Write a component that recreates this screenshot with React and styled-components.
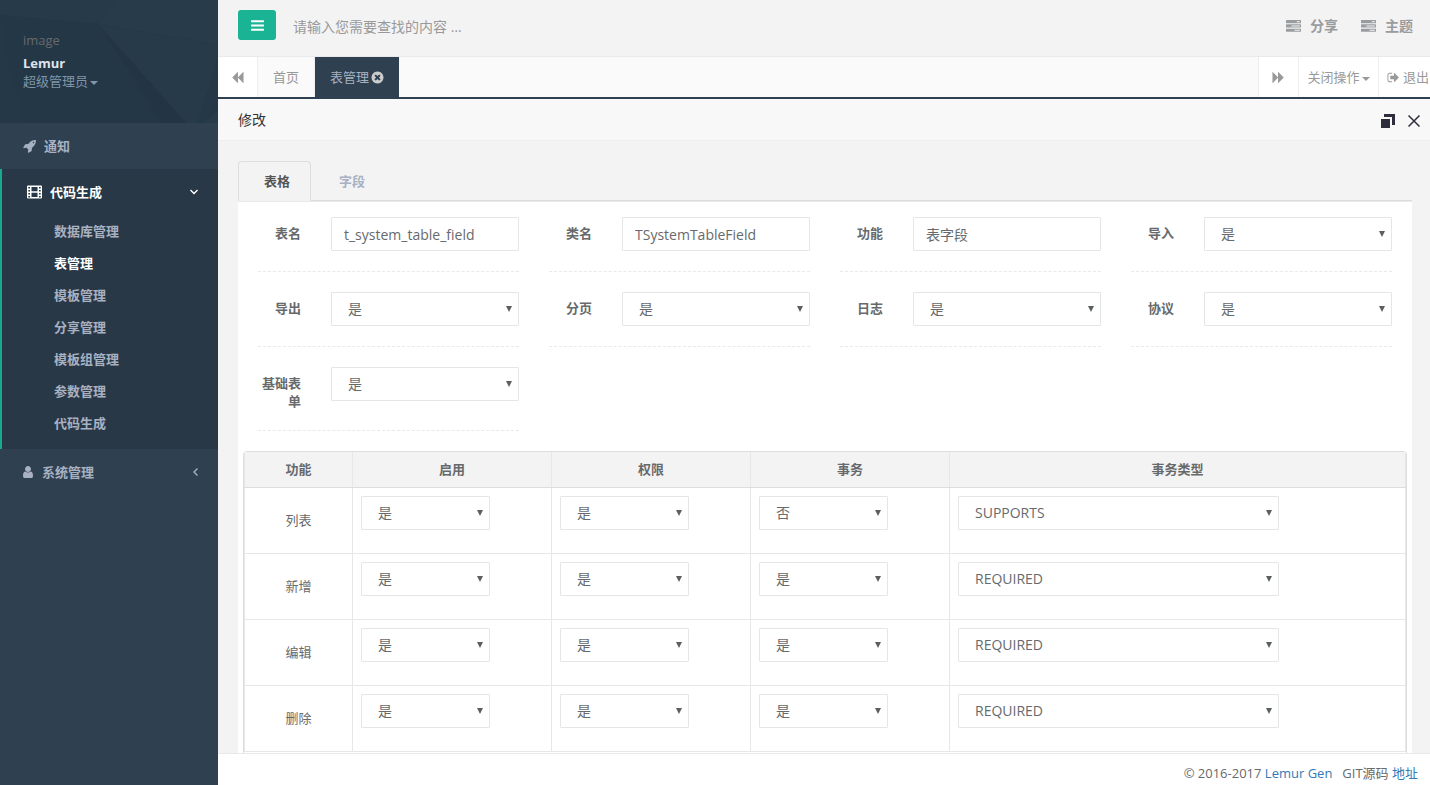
import React from "react";
import styled, { createGlobalStyle, css } from "styled-components";

const Global = createGlobalStyle`
  *, *::before, *::after { box-sizing: border-box; }
  body {
    margin: 0;
    font-family: "Open Sans", "Noto Sans CJK SC", sans-serif;
    font-size: 13px;
    line-height: 18px;
    color: #676a6c;
    background: #2f4050;
  }
  button, input, select { font: inherit; color: inherit; }
  a { text-decoration: none; color: inherit; }
  ul { list-style: none; margin: 0; padding: 0; }
`;

const Shell = styled.div`
  display: grid;
  grid-template-columns: 218px minmax(0, 1fr);
  height: 100vh;
`;

/* Icons */
const PATHS = {
  rocket:
    "M1440 448q0-40-28-68t-68-28-68 28-28 68 28 68 68 28 68-28 28-68zm224-288q0 249-75.5 430.5t-253.5 360.5q-81 80-195 176l-20 379q-2 16-16 26l-384 224q-7 4-16 4-12 0-23-9l-64-64q-13-14-8-32l85-276-281-281-276 85q-3 1-9 1-14 0-23-9l-64-64q-17-19-5-39l224-384q10-14 26-16l379-20q96-114 176-195 188-187 358-258t431-71q14 0 24 9.5t10 22.5z",
  user:
    "M1536 1399q0 109-62.5 187t-150.5 78h-854q-88 0-150.5-78t-62.5-187q0-85 8.5-160.5t31.5-152 58.5-131 94-89 134.5-34.5q131 128 313 128t313-128q76 0 134.5 34.5t94 89 58.5 131 31.5 152 8.5 160.5zm-256-887q0 159-112.5 271.5t-271.5 112.5-271.5-112.5-112.5-271.5 112.5-271.5 271.5-112.5 271.5 112.5 112.5 271.5z",
  tasks:
    "M1024 1408h640v-128h-640v128zm-384-512h1024v-128h-1024v128zm640-512h384v-128h-384v128zm512 832v256q0 26-19 45t-45 19h-1664q-26 0-45-19t-19-45v-256q0-26 19-45t45-19h1664q26 0 45 19t19 45zm0-512v256q0 26-19 45t-45 19h-1664q-26 0-45-19t-19-45v-256q0-26 19-45t45-19h1664q26 0 45 19t19 45zm0-512v256q0 26-19 45t-45 19h-1664q-26 0-45-19t-19-45v-256q0-26 19-45t45-19h1664q26 0 45 19t19 45z",
  bars:
    "M1664 1344v128q0 26-19 45t-45 19h-1408q-26 0-45-19t-19-45v-128q0-26 19-45t45-19h1408q26 0 45 19t19 45zm0-512v128q0 26-19 45t-45 19h-1408q-26 0-45-19t-19-45v-128q0-26 19-45t45-19h1408q26 0 45 19t19 45zm0-512v128q0 26-19 45t-45 19h-1408q-26 0-45-19t-19-45v-128q0-26 19-45t45-19h1408q26 0 45 19t19 45z",
  close:
    "M1277 1122q0-26-19-45l-181-181 181-181q19-19 19-45 0-27-19-46l-90-90q-19-19-46-19-26 0-45 19l-181 181-181-181q-19-19-45-19-27 0-46 19l-90 90q-19 19-19 46 0 26 19 45l181 181-181 181q-19 19-19 45 0 27 19 46l90 90q19 19 46 19 26 0 45-19l181-181 181 181q19 19 45 19 27 0 46-19l90-90q19-19 19-46zm387-226q0 209-103 385.5t-279.5 279.5-385.5 103-385.5-103-279.5-279.5-103-385.5 103-385.5 279.5-279.5 385.5-103 385.5 103 279.5 279.5 103 385.5z",
  signOut:
    "M704 1440q0 4 1 20t.5 26.5-3 23.5-10 19.5-20.5 6.5h-320q-119 0-203.5-84.5t-84.5-203.5v-704q0-119 84.5-203.5t203.5-84.5h320q13 0 22.5 9.5t9.5 22.5q0 4 1 20t.5 26.5-3 23.5-10 19.5-20.5 6.5h-320q-66 0-113 47t-47 113v704q0 66 47 113t113 47h312l11.5 1 11.5 3 8 5.5 7 9 2 13.5zm928-544q0 26-19 45l-544 544q-19 19-45 19t-45-19-19-45v-288h-448q-26 0-45-19t-19-45v-384q0-26 19-45t45-19h448v-288q0-26 19-45t45-19 45 19l544 544q19 19 19 45z",
  backward:
    "M1683 141q19-19 32-13t13 32v1472q0 26-13 32t-32-13l-710-710q-9-9-13-19v710q0 26-13 32t-32-13l-710-710q-19-19-19-45t19-45l710-710q19-19 32-13t13 32v710q4-10 13-19z",
  forward:
    "M109 1651q-19 19-32 13t-13-32v-1472q0-26 13-32t32 13l710 710q9 9 13 19v-710q0-26 13-32t32 13l710 710q19 19 19 45t-19 45l-710 710q-19 19-32 13t-13-32v-710q-4 10-13 19z",
};

const Svg = styled.svg`
  flex: none;
  display: block;
`;

const Icon = ({ name, size = 13, viewBox = "0 0 1792 1792" }) => (
  <Svg width={size} height={size} viewBox={viewBox} fill="currentColor" aria-hidden="true">
    <path d={PATHS[name]} />
  </Svg>
);

const FilmIcon = () => (
  <Svg width="16" height="14" viewBox="0 0 16 14" aria-hidden="true">
    <path
      fill="currentColor"
      fillRule="evenodd"
      d="M1 .5h13a1 1 0 0 1 1 1v11a1 1 0 0 1-1 1H1a1 1 0 0 1-1-1v-11a1 1 0 0 1 1-1zM1.300 2v1.500h1.700V2zM1.300 5v1.500h1.700V5zM1.300 8v1.500h1.700V8zM1.300 11v1.500h1.700V11zM12 2v1.500h1.700V2zM12 5v1.500h1.700V5zM12 8v1.500h1.700V8zM12 11v1.500h1.700V11zM4.500 2v4.300h6V2zM4.500 7.700v4.300h6V7.700z"
    />
  </Svg>
);

const Chevron = ({ d }) => (
  <Svg width="8" height="8" viewBox="0 0 8 8" fill="none" stroke="currentColor" strokeWidth="1.400" aria-hidden="true">
    <path d={d} />
  </Svg>
);

const Caret = styled.span`
  border: 4px solid transparent;
  border-top-color: currentColor;
  border-bottom: 0;
  margin-top: 3px;
`;

/* Sidebar */
const Sidebar = styled.nav`
  background: #2f4050;
  color: #a7b1c2;
  font-weight: 600;
`;

const Profile = styled.div`
  position: relative;
  height: 123px;
  padding: 31px 23px 0;
  background: #243747;
  overflow: hidden;
  font-weight: 400;
`;

const Facets = styled.svg`
  position: absolute;
  inset: 0;
  width: 100%;
  height: 100%;
`;

const ProfileText = styled.div`
  position: relative;
  display: flex;
  flex-direction: column;
`;

const Avatar = styled.span`
  color: #676a6c;
  margin-bottom: 5px;
`;

const UserName = styled.strong`
  color: #dfe4ed;
  font-weight: 700;
`;

const Role = styled.button`
  display: flex;
  align-items: center;
  gap: 2px;
  padding: 0;
  border: 0;
  background: none;
  color: #8095a8;
  cursor: pointer;
`;

const MenuLink = styled.a`
  display: flex;
  align-items: center;
  gap: 7px;
  height: 46px;
  padding: 0 18px 0 23px;

  svg:last-child:not(:first-child) { margin-left: auto; }
`;

const Group = styled.li`
  ${(p) =>
    p.$open &&
    css`
      border-left: 2px solid #19aa8d;
      background: #293846;
      padding-bottom: 10px;
      > a { color: #fff; padding: 0 20px 0 25px; }
    `}
`;

const SubLink = styled.a`
  display: flex;
  align-items: center;
  height: 32px;
  padding-left: 52px;
  color: ${(p) => (p.$active ? "#fff" : "inherit")};
`;

/* Top bar */
const Main = styled.div`
  display: flex;
  flex-direction: column;
  min-height: 0;
  background: #f3f3f4;
`;

const TopBar = styled.header`
  flex: none;
  display: flex;
  align-items: center;
  height: 57px;
  padding: 0 17px 6px 20px;
  border-bottom: 1px solid #e7eaec;
  color: #999c9e;
  font-size: 14px;
`;

const MenuButton = styled.button`
  display: flex;
  align-items: center;
  justify-content: center;
  width: 38px;
  height: 30px;
  border: 0;
  border-radius: 3px;
  background: #1ab394;
  color: #fff;
  cursor: pointer;
`;

const Search = styled.input`
  flex: 1;
  min-width: 0;
  height: 30px;
  margin: 0 16px;
  padding: 3px 1px 0;
  border: 0;
  background: none;
  outline: none;
  &::placeholder { color: #999; opacity: 1; }
`;

const TopLink = styled.a`
  display: flex;
  align-items: center;
  gap: 9px;
  margin-left: 23px;
  padding-top: 2px;
  font-weight: 600;
`;

/* Page tabs */
const PageTabs = styled.div`
  flex: none;
  display: flex;
  height: 42px;
  border-bottom: 2px solid #2f4050;
  background: #fafafa;
  color: #999;
`;

const PageTab = styled.a`
  display: flex;
  align-items: center;
  gap: 2px;
  padding: 0 15px;
  border-right: ${(p) => (p.$active ? "0" : "1px solid #eee")};
  background: ${(p) => (p.$active ? "#2f4050" : "transparent")};
  color: ${(p) => (p.$active ? "#a7b1c2" : "inherit")};
  svg { color: #ccc; }
`;

const BarButton = styled.button`
  display: flex;
  align-items: center;
  justify-content: center;
  gap: 2px;
  width: ${(p) => p.$width};
  padding: 0;
  border: 0 solid #eee;
  border-${(p) => p.$edge}-width: 1px;
  background: #fff;
  white-space: nowrap;
  cursor: pointer;
`;

const ExitButton = styled(BarButton)`
  justify-content: flex-start;
  gap: 3px;
  padding-left: 8px;
`;

const Spacer = styled.div`
  flex: 1;
`;

/* Dialog */
const TitleBar = styled.div`
  flex: none;
  display: flex;
  align-items: center;
  gap: 13px;
  height: 42px;
  padding: 0 10px 0 20px;
  border-bottom: 1px solid #eee;
  background: #f8f8f8;
  color: #333;
`;

const Title = styled.h1`
  flex: 1;
  margin: 0;
  font-size: 14px;
  font-weight: 400;
`;

const IconButton = styled.button`
  padding: 2px 0 0;
  border: 0;
  background: none;
  color: #2e2d3c;
  cursor: pointer;
`;

const Content = styled.main`
  flex: 1;
  min-height: 0;
  overflow: hidden;
  padding: 20px 18px 0 20px;
`;

const Tabs = styled.div`
  display: flex;
  border-bottom: 1px solid #ddd;
`;

const Tab = styled.button`
  height: 40px;
  margin-bottom: -1px;
  padding: 0 20px 0 27px;
  border: 1px solid transparent;
  border-radius: 4px 4px 0 0;
  background: none;
  color: #a7b1c2;
  font-weight: 600;
  cursor: pointer;
  ${(p) =>
    p.$active &&
    css`
      padding: 0 20px 0 25px;
      border-color: #ddd;
      border-bottom-color: #f3f3f4;
      background: #f3f3f4;
      color: #555;
    `}
`;

const Panel = styled.section`
  padding: 15px 5px 20px;
  border-top: 1px solid #e7eaec;
  background: #fff;
`;

const Form = styled.form`
  display: grid;
  grid-template-columns: repeat(4, minmax(0, 1fr));
  gap: 20px 30px;
  padding: 0 15px;
`;

const FieldRow = styled.div`
  display: grid;
  grid-template-columns: 43px minmax(0, 1fr);
  gap: 30px;
  align-items: start;
  padding-bottom: 20px;
  border-bottom: 1px dashed #e7eaec;
`;

const Label = styled.label`
  padding-top: 7px;
  text-align: right;
  font-weight: 600;
`;

const control = css`
  display: block;
  width: 100%;
  height: 34px;
  border: 1px solid #e5e6e7;
  border-radius: 1px;
  background: #fff;
  font-size: 14px;
  line-height: 20px;
  outline: none;
`;

const TextInput = styled.input`
  ${control}
  padding: 6px 12px;
`;

const SelectBox = styled.div`
  position: relative;
  width: ${(p) => (p.$inCell ? "calc(75% - 8px)" : "100%")};
  &::after {
    content: "";
    position: absolute;
    top: 14px;
    right: 7px;
    border: 3px solid transparent;
    border-top: 6px solid #5c5f61;
    border-bottom: 0;
    pointer-events: none;
  }
`;

const NativeSelect = styled.select`
  ${control}
  appearance: none;
  padding: 6px 16px;
`;

const Select = ({ value, inCell, options = ["是", "否"], ...rest }) => (
  <SelectBox $inCell={inCell}>
    <NativeSelect defaultValue={value} {...rest}>
      {options.map((o) => (
        <option key={o}>{o}</option>
      ))}
    </NativeSelect>
  </SelectBox>
);

/* Table */
const TableFrame = styled.div`
  margin-top: 20px;
  padding-bottom: 20px;
  border: 1px solid #ddd;
  border-radius: 4px;
`;

const Table = styled.table`
  width: 100%;
  table-layout: fixed;
  border-collapse: collapse;
  border-left: 1px solid #e7e7e7;
  border-right: 1px solid #e7e7e7;
`;

const Th = styled.th`
  height: 35px;
  width: ${(p) => p.$width};
  padding: 0 8px;
  border: 1px solid #e7e7e7;
  border-top: 0;
  border-bottom-color: #ddd;
  background: #f3f3f4;
  font-weight: 600;
`;

const Td = styled.td`
  height: 66px;
  padding: 8px;
  border: 1px solid #e7e7e7;
  text-align: center;
  vertical-align: ${(p) => (p.$name ? "middle" : "top")};
`;

const Footer = styled.footer`
  flex: none;
  display: flex;
  justify-content: flex-end;
  gap: 10px;
  height: 32px;
  padding: 10px 12px 0 20px;
  border-top: 1px solid #e7eaec;
  background: #fff;
`;

const FooterLink = styled.a`
  color: #337ab7;
`;

const SUB = ["数据库管理", "表管理", "模板管理", "分享管理", "模板组管理", "参数管理", "代码生成"];

const FIELDS = [
  ["表名", "t_system_table_field", "text"],
  ["类名", "TSystemTableField", "text"],
  ["功能", "表字段", "text"],
  ["导入", "是"],
  ["导出", "是"],
  ["分页", "是"],
  ["日志", "是"],
  ["协议", "是"],
  ["基础表单", "是"],
];

const COLUMNS = [
  ["功能", "108px"],
  ["启用", "199px"],
  ["权限", "199px"],
  ["事务", "199px"],
  ["事务类型", "auto"],
];

const ROWS = [
  ["列表", "是", "是", "否", "SUPPORTS"],
  ["新增", "是", "是", "是", "REQUIRED"],
  ["编辑", "是", "是", "是", "REQUIRED"],
  ["删除", "是", "是", "是", "REQUIRED"],
];

export default function App() {
  return (
    <>
      <Global />
      <Shell>
        <Sidebar>
          <Profile>
            <Facets viewBox="0 0 218 123" preserveAspectRatio="none" aria-hidden="true">
              <path fill="#263a49" d="M0 0H115L98 24L0 15z" />
              <path fill="#273b4a" d="M115 0H218V45L98 24z" />
              <path fill="#263a49" d="M98 24L218 45V60L198 123H186z" />
              <path fill="#253848" d="M218 60V105L203 123H198z" />
              <path fill="#233545" d="M98 24L186 123H162z" />
              <path fill="#273b4a" d="M218 110V123H203z" />
              <path fill="#253848" d="M0 15L10 70L25 123H0z" />
            </Facets>
            <ProfileText>
              <Avatar>image</Avatar>
              <UserName>Lemur</UserName>
              <Role type="button">
                超级管理员
                <Caret />
              </Role>
            </ProfileText>
          </Profile>
          <ul>
            <Group>
              <MenuLink href="#notice">
                <Icon name="rocket" size={14} />
                通知
              </MenuLink>
            </Group>
            <Group $open>
              <MenuLink href="#generator">
                <FilmIcon />
                代码生成
                <Chevron d="M.5 2L4 5.500L7.500 2" />
              </MenuLink>
              <ul>
                {SUB.map((s) => (
                  <li key={s}>
                    <SubLink href={`#${s}`} $active={s === "表管理"}>
                      {s}
                    </SubLink>
                  </li>
                ))}
              </ul>
            </Group>
            <Group>
              <MenuLink href="#system">
                <Icon name="user" size={12} viewBox="256 128 1536 1536" />
                系统管理
                <Chevron d="M5.500 .5L2 4L5.500 7.500" />
              </MenuLink>
            </Group>
          </ul>
        </Sidebar>

        <Main>
          <TopBar>
            <MenuButton type="button" aria-label="菜单">
              <Icon name="bars" size={15} />
            </MenuButton>
            <Search type="text" aria-label="搜索" placeholder="请输入您需要查找的内容 …" />
            <TopLink href="#share">
              <Icon name="tasks" size={15} />
              分享
            </TopLink>
            <TopLink href="#theme">
              <Icon name="tasks" size={15} />
              主题
            </TopLink>
          </TopBar>

          <PageTabs>
            <BarButton type="button" $width="40px" $edge="right" aria-label="向左">
              <Icon name="backward" />
            </BarButton>
            <PageTab href="#home">首页</PageTab>
            <PageTab href="#tables" $active>
              表管理
              <Icon name="close" viewBox="64 64 1664 1664" />
            </PageTab>
            <Spacer />
            <BarButton type="button" $width="40px" $edge="left" aria-label="向右">
              <Icon name="forward" />
            </BarButton>
            <BarButton type="button" $width="80px" $edge="left">
              关闭操作
              <Caret />
            </BarButton>
            <ExitButton type="button" $width="52px" $edge="left">
              <Icon name="signOut" />
              退出
            </ExitButton>
          </PageTabs>

          <TitleBar>
            <Title>修改</Title>
            <IconButton type="button" aria-label="还原">
              <Svg width="14" height="14" viewBox="0 0 14 14" fill="currentColor">
                <path d="M0 5h9v9H0zM3 0h11v11h-3V3H3z" />
              </Svg>
            </IconButton>
            <IconButton type="button" aria-label="关闭">
              <Svg width="12" height="12" viewBox="0 0 12 12" stroke="currentColor" strokeWidth="1.500">
                <path d="M.5 .5l11 11M11.500 .5l-11 11" />
              </Svg>
            </IconButton>
          </TitleBar>

          <Content>
            <Tabs>
              <Tab type="button" $active>
                表格
              </Tab>
              <Tab type="button">字段</Tab>
            </Tabs>
            <Panel>
              <Form>
                {FIELDS.map(([label, value, type], i) => (
                  <FieldRow key={label}>
                    <Label htmlFor={`field-${i}`}>{label}</Label>
                    {type ? (
                      <TextInput id={`field-${i}`} type="text" defaultValue={value} />
                    ) : (
                      <Select id={`field-${i}`} value={value} />
                    )}
                  </FieldRow>
                ))}
              </Form>
              <TableFrame>
                <Table>
                  <thead>
                    <tr>
                      {COLUMNS.map(([name, width]) => (
                        <Th key={name} $width={width} scope="col">
                          {name}
                        </Th>
                      ))}
                    </tr>
                  </thead>
                  <tbody>
                    {ROWS.map(([name, ...values]) => (
                      <tr key={name}>
                        <Td $name>{name}</Td>
                        {values.map((v, i) => (
                          <Td key={i}>
                            <Select
                              inCell
                              value={v}
                              options={i === 3 ? ["SUPPORTS", "REQUIRED"] : undefined}
                              aria-label={`${name} ${COLUMNS[i + 1][0]}`}
                            />
                          </Td>
                        ))}
                      </tr>
                    ))}
                  </tbody>
                </Table>
              </TableFrame>
            </Panel>
          </Content>

          <Footer>
            <span>
              © 2016-2017 <FooterLink href="#lemur">Lemur Gen</FooterLink>
            </span>
            <span>
              GIT源码 <FooterLink href="#git">地址</FooterLink>
            </span>
          </Footer>
        </Main>
      </Shell>
    </>
  );
}
